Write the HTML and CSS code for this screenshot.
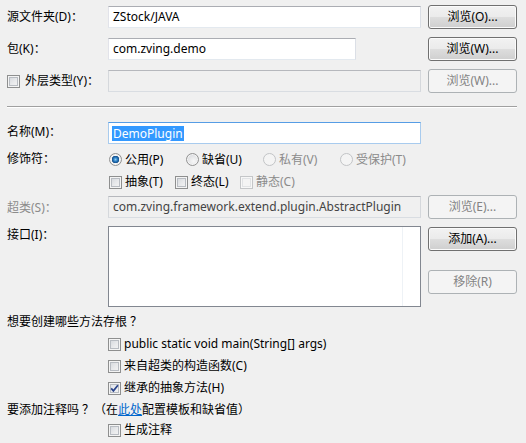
FILE: index.html
```html
<!DOCTYPE html>
<html>
<head>
<meta charset="utf-8">
<link rel="stylesheet" href="styles.css">
</head>
<body>
<div class="dlg">
  <div class="form top">
    <div class="lbl">源文件夹(D)：</div>
    <div class="field">ZStock/JAVA</div>
    <button class="btn">浏览(O)...</button>

    <div class="lbl">包(K)：</div>
    <div class="field short">com.zving.demo</div>
    <button class="btn">浏览(W)...</button>

    <div class="lbl opt"><span class="cb"></span><span class="opt-text">外层类型(Y)：</span></div>
    <div class="field off"></div>
    <button class="btn" disabled>浏览(W)...</button>
  </div>

  <div class="sep"></div>

  <div class="form mid">
    <div class="lbl r-name">名称(M)：</div>
    <div class="field focus r-name-f"><span class="sel">DemoPlugin</span></div>
    <div></div>

    <div class="lbl r-mod">修饰符：</div>
    <div class="group radios">
      <span class="opt"><span class="rb on"></span>公用(P)</span>
      <span class="opt"><span class="rb"></span>缺省(U)</span>
      <span class="opt dis"><span class="rb"></span>私有(V)</span>
      <span class="opt dis"><span class="rb"></span>受保护(T)</span>
    </div>
    <div></div>

    <div></div>
    <div class="group checks">
      <span class="opt"><span class="cb"></span>抽象(T)</span>
      <span class="opt"><span class="cb"></span>终态(L)</span>
      <span class="opt dis"><span class="cb"></span>静态(C)</span>
    </div>
    <div></div>

    <div class="lbl dis r-sup">超类(S)：</div>
    <div class="field off r-sup-f">com.zving.framework.extend.plugin.AbstractPlugin</div>
    <button class="btn r-sup-b" disabled>浏览(E)...</button>

    <div class="lbl r-if">接口(I)：</div>
    <div class="list"><div class="col"></div></div>
    <div class="btncol">
      <button class="btn">添加(A)...</button>
      <button class="btn" disabled>移除(R)</button>
    </div>
  </div>

  <div class="lines">
    <div class="line head">想要创建哪些方法存根<span class="q">？</span></div>
    <div class="line ind"><span class="cb"></span>public static void main(String[] args)</div>
    <div class="line ind"><span class="cb"></span>来自超类的构造函数(C)</div>
    <div class="line ind"><span class="cb on"><svg width="13" height="13" viewBox="0 0 13 13"><path d="M3.2 6.4 L5.4 8.9 L9.9 3.2" fill="none" stroke="#29438a" stroke-width="1.7"/></svg></span>继承的抽象方法(H)</div>
    <div class="line note">要添加注释吗<span class="q">？</span>（在<a class="link" href="#">此处</a>配置模板和缺省值）</div>
    <div class="line ind last"><span class="cb"></span>生成注释</div>
  </div>
</div>
</body>
</html>
```

FILE: styles.css
```css
html, body {
  margin: 0;
  background: #f0f0f0;
}
body {
  font-family: "Noto Sans", "Noto Sans CJK SC", sans-serif;
  font-size: 12px;
  line-height: 16px;
  color: #000;
  width: 526px;
  height: 443px;
  overflow: hidden;
}
.dlg {
  padding: 5px 9px 0 7px;
}
.form {
  display: grid;
  grid-template-columns: 94px 313px 89px;
  column-gap: 7px;
}
.top {
  grid-template-rows: repeat(3, 24px);
  row-gap: 8px;
}
.lbl {
  align-self: center;
  white-space: nowrap;
}
.lbl.opt {
  display: flex;
  align-items: center;
}
.opt-text {
  margin-left: 2px;
}
.dis {
  color: #8b8b8b;
}
.q {
  display: inline-block;
  padding-left: 3px;
}
.field {
  box-sizing: border-box;
  height: 22px;
  align-self: center;
  background: #fff;
  border: 1px solid;
  border-color: #abadb3 #dbdfe6 #e3e9ef #e2e3ea;
  padding: 0 4px;
  line-height: 20px;
  white-space: nowrap;
  overflow: hidden;
}
.field.short {
  width: 248px;
}
.field.off {
  background: #f0f0f0;
  border-color: #b6b8bd #d5d8dc #d9dde2 #d5d8dc;
  color: #444;
}
.field.focus {
  border-color: #569de5 #a8cbee #a8cbee #a8cbee;
  padding-left: 3px;
}
.sel {
  background: #3399ff;
  color: #fff;
  display: inline-block;
  line-height: 15px;
  padding: 0 1px;
}
.btn {
  box-sizing: border-box;
  width: 89px;
  height: 24px;
  padding: 0;
  font: inherit;
  color: #000;
  border: 1px solid #707070;
  border-radius: 3px;
  background: linear-gradient(#f2f2f2 0%, #ebebeb 48%, #dddddd 52%, #cfcfcf 100%);
  box-shadow: inset 0 0 0 1px #fbfbfb;
}
.btn[disabled] {
  color: #838383;
  border-color: #adb2b5;
  background: #f4f4f4;
  box-shadow: none;
}
.sep {
  margin-top: 13px;
  height: 0;
  border-top: 1px solid #a0a0a0;
  border-bottom: 1px solid #ffffff;
}
.mid {
  margin-top: 13px;
  grid-template-rows: 26px 24px 24px 31px 81px;
}
.r-name {
  align-self: start;
  margin-top: 3px;
}
.r-name-f {
  align-self: start;
  margin-top: 1px;
  display: flex;
  align-items: center;
}
.r-mod {
  align-self: center;
  margin-top: -1px;
}
.r-sup {
  align-self: start;
  margin-top: 5px;
}
.r-sup-f {
  align-self: start;
  margin-top: 1px;
}
.r-sup-b {
  align-self: start;
}
.r-if {
  align-self: start;
  margin-top: 1px;
}
.group {
  display: flex;
  align-items: center;
}
.radios {
  align-self: center;
  margin-top: 1px;
}
.checks {
  align-self: start;
  height: 20px;
  margin-top: 1px;
}
.group .opt {
  display: inline-flex;
  align-items: center;
  white-space: nowrap;
}
.radios .opt {
  width: 77px;
  padding-left: 1px;
  box-sizing: border-box;
}
.checks .opt {
  width: 66px;
  padding-left: 1px;
  box-sizing: border-box;
}
.checks .opt:nth-child(2) {
  width: 65px;
}
.cb {
  box-sizing: border-box;
  flex: none;
  display: inline-block;
  width: 13px;
  height: 13px;
  border: 1px solid #8e8f8f;
  background: linear-gradient(135deg, #d0d4d9 0%, #e9eaec 55%, #f6f6f6 100%);
  box-shadow: inset 0 0 0 1px #f4f4f4, inset 0 0 0 2px #b8bcc2;
  margin-right: 3px;
  position: relative;
}
.cb.on {
  background: linear-gradient(135deg, #dfe3e8 0%, #f4f4f4 100%);
}
.cb svg {
  position: absolute;
  left: -1px;
  top: -1px;
}
.dis .cb {
  border-color: #c4c6c8;
  background: #f4f4f4;
  box-shadow: inset 0 0 0 1px #f7f7f7, inset 0 0 0 2px #e1e3e5;
}
.rb {
  box-sizing: border-box;
  flex: none;
  display: inline-block;
  width: 13px;
  height: 13px;
  border-radius: 50%;
  border: 1px solid #929292;
  background: radial-gradient(circle at 60% 65%, #f8f8f8 0%, #e2e3e5 55%, #c9cbd0 100%);
  box-shadow: inset 0 0 0 1px #f4f4f4;
  margin-right: 3px;
}
.rb.on {
  background: radial-gradient(circle at 50% 50%, #8fd0f4 0px, #2b7bc0 2px, #144f8a 3.5px, #f4f4f4 4px, #e2e3e5 5px, #c9cbd0 6px);
}
.dis .rb {
  border-color: #c2c4c6;
  background: #f4f4f4;
}
.list {
  box-sizing: border-box;
  height: 81px;
  background: #fff;
  border: 1px solid #828790;
  position: relative;
}
.col {
  position: absolute;
  left: 293px;
  top: 0;
  bottom: 0;
  width: 1px;
  background: #eef2f6;
}
.btncol {
  display: flex;
  flex-direction: column;
  gap: 19px;
  padding-top: 1px;
}
.lines {
  margin-top: 4px;
}
.line {
  height: 22px;
  display: flex;
  align-items: center;
  white-space: nowrap;
}
.line.ind {
  padding-left: 101px;
}
.line.note {
  height: 22px;
}
.line.last {
  height: 20px;
  margin-top: -1px;
}
.link {
  color: #0066cc;
  text-decoration: underline;
}
```
